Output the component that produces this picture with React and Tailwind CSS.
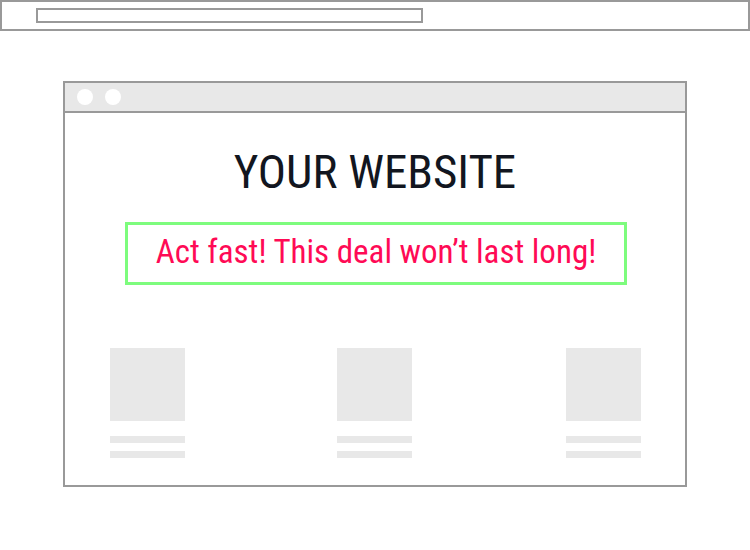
function Card() {
  return (
    <div className="w-[75px] flex flex-col">
      <div className="h-[73px] bg-[#e8e8e8]" />
      <div className="h-[7px] mt-[15px] bg-[#e8e8e8]" />
      <div className="h-[7px] mt-[8px] bg-[#e8e8e8]" />
    </div>
  );
}

export default function App() {
  return (
    <div className="w-[750px] h-[550px] bg-white flex flex-col" style={{ fontFamily: "Roboto, sans-serif" }}>
      <div className="h-[31px] w-full border-2 border-[#999999] pl-[34px] pt-[6px]">
        <div className="w-[387px] h-[15px] border-2 border-[#999999]" />
      </div>
      <div className="mt-[50px] ml-[63px] w-[624px] h-[406px] border-2 border-[#999999] flex flex-col">
        <div className="h-[30px] bg-[#e8e8e8] border-b-2 border-[#999999] flex items-center gap-[12px] pl-[12px]">
          <div className="w-[16px] h-[16px] rounded-full bg-white" />
          <div className="w-[16px] h-[16px] rounded-full bg-white" />
        </div>
        <h1 className="mt-[35px] text-center text-[47px] leading-none text-[#121620] font-stretch-condensed font-normal">
          YOUR WEBSITE
        </h1>
        <div className="mt-[27px] ml-[60px] w-[502px] h-[63px] border-[3px] border-[#7dfc7d] flex justify-center pt-[10px]">
          <span className="text-[33px] leading-none text-[#ff0a55] font-stretch-condensed whitespace-nowrap">
            Act fast! This deal won’t last long!
          </span>
        </div>
        <div className="mt-[63px] pl-[45px] flex">
          <Card />
          <div className="ml-[152px]"><Card /></div>
          <div className="ml-[154px]"><Card /></div>
        </div>
      </div>
    </div>
  );
}
